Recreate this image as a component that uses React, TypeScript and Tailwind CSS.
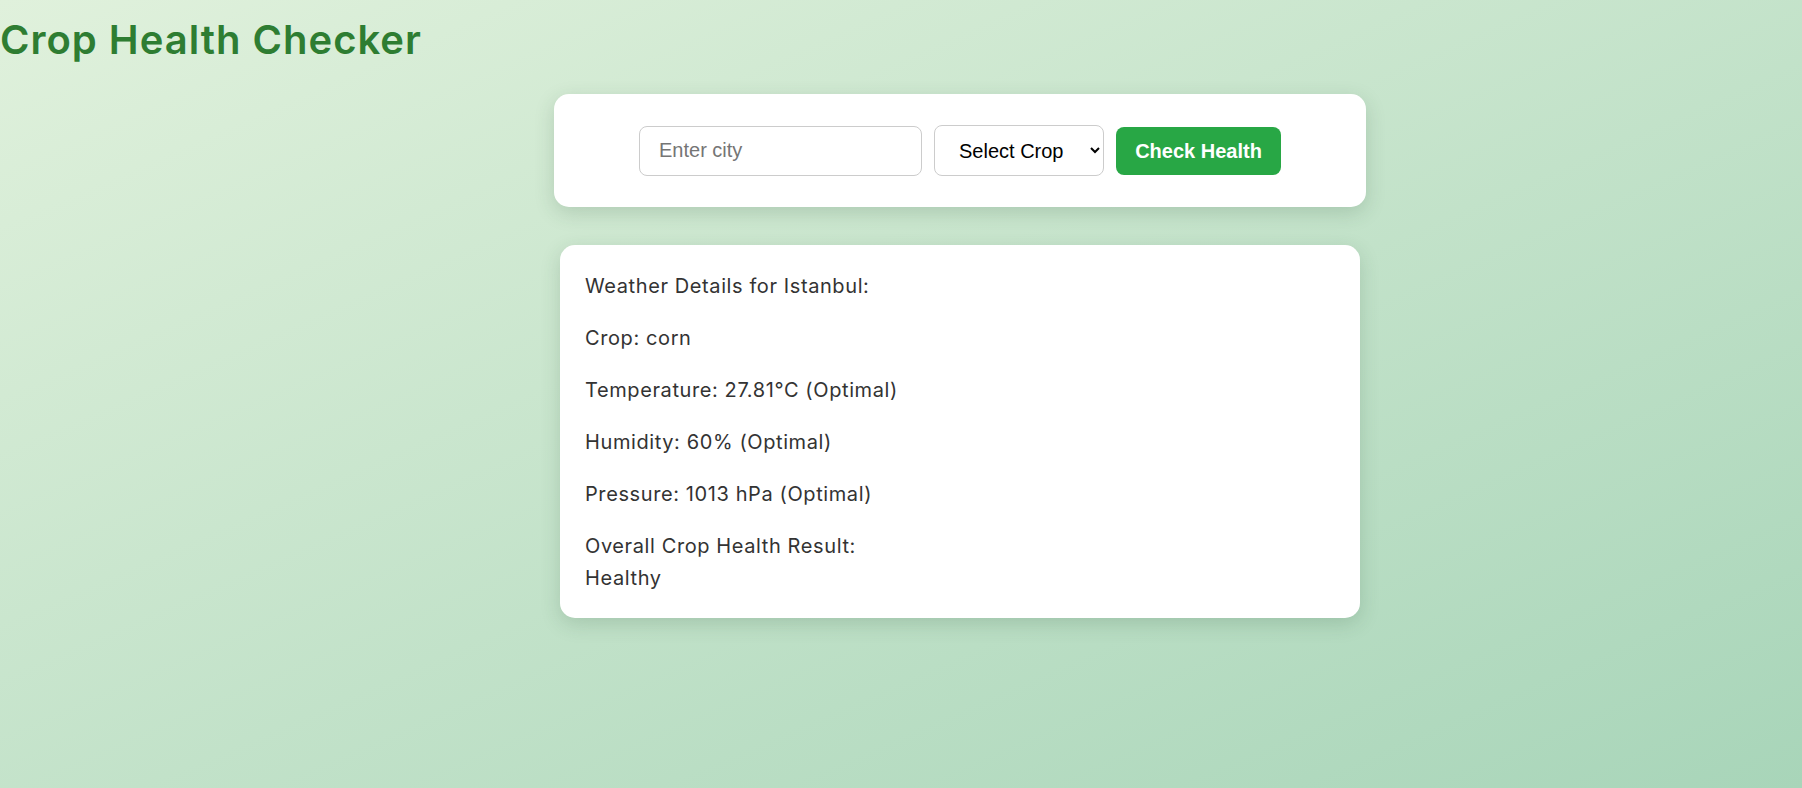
export default function App() {
  const lines = [
    "Weather Details for Istanbul:",
    "Crop: corn",
    "Temperature: 27.81°C (Optimal)",
    "Humidity: 60% (Optimal)",
    "Pressure: 1013 hPa (Optimal)",
  ];

  return (
    <div className="min-h-screen bg-gradient-to-br from-[#e0f1dc] to-[#a8d5b9] font-['Inter','Noto_Sans',sans-serif]">
      <h1 className="m-0 pt-[12px] text-[40px] leading-[56px] font-semibold text-[#2e7d32] tracking-[1px]">
        Crop Health Checker
      </h1>
      <div className="flex flex-col items-center pl-[118px] pt-[26px]">
        <form className="w-[812px] bg-white rounded-[15px] shadow-[0_6px_20px_rgba(40,80,50,0.18)] flex justify-center items-center gap-[12px] py-[31px]">
          <input
            type="text"
            placeholder="Enter city"
            className="w-[283px] h-[50px] border border-[#ccc] rounded-[8px] pl-[19px] text-[20px] font-['Liberation_Sans',Arial,sans-serif] placeholder:text-[#757575] outline-none bg-white"
          />
          <select className="w-[170px] h-[51px] border border-[#ccc] rounded-[8px] pl-[20px] pr-[4px] text-[20px] text-black font-['Liberation_Sans',Arial,sans-serif] bg-white">
            <option>Select Crop</option>
            <option>corn</option>
            <option>wheat</option>
            <option>rice</option>
          </select>
          <button
            type="button"
            className="w-[165px] h-[48px] rounded-[8px] bg-[#28a745] text-white text-[20px] font-bold font-['Liberation_Sans',Arial,sans-serif]"
          >
            Check Health
          </button>
        </form>
        <div className="w-[800px] mt-[38px] bg-white rounded-[15px] shadow-[0_6px_20px_rgba(40,80,50,0.18)] px-[25px] pt-[25px] pb-[24px] text-[20px] leading-[32px] tracking-[0.6px] text-[#333]">
          <div className="flex flex-col gap-[20px]">
            {lines.map((l) => (
              <p key={l} className="m-0">
                {l}
              </p>
            ))}
            <p className="m-0">
              Overall Crop Health Result:
              <br />
              Healthy
            </p>
          </div>
        </div>
      </div>
    </div>
  );
}
